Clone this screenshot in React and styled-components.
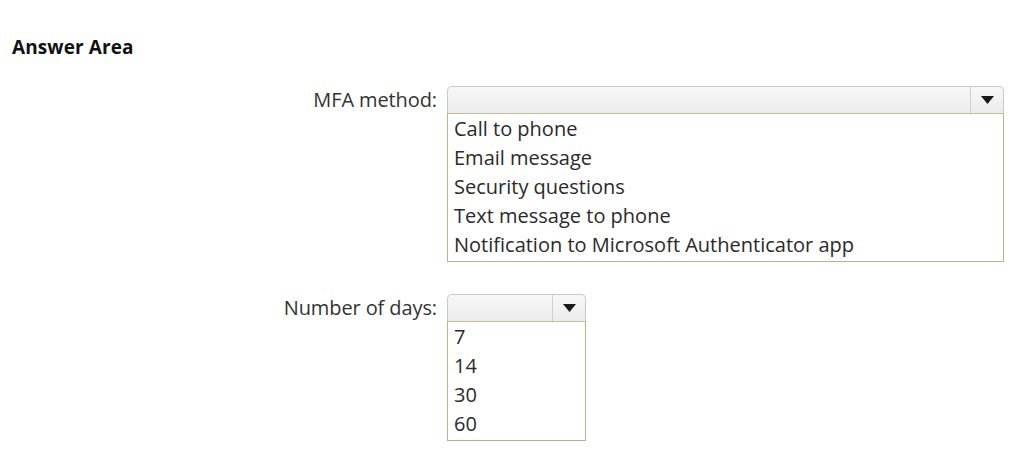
import React from "react";
import styled, { createGlobalStyle } from "styled-components";

const GlobalStyle = createGlobalStyle`
  body {
    margin: 0;
    background: #fff;
    font-family: "Open Sans", "Liberation Sans", sans-serif;
    color: #222;
  }
`;

const Page = styled.div`
  padding: 37px 12px 0;
`;

const Heading = styled.h2`
  margin: 0 0 29px;
  font-size: 19px;
  font-weight: 700;
  color: #111;
  line-height: 20px;
  letter-spacing: 0.1px;
`;

const Row = styled.div`
  display: flex;
  align-items: flex-start;
  margin-bottom: ${(p) => p.gap || 0}px;
`;

const Label = styled.div`
  width: 435px;
  flex-shrink: 0;
  text-align: right;
  font-size: 20px;
  line-height: 27px;
  color: #333;
  padding-right: 10px;
  box-sizing: border-box;
  letter-spacing: -0.1px;
`;

const Dropdown = styled.div`
  display: flex;
  flex-direction: column;
  width: ${(p) => p.width}px;
`;

const SelectBox = styled.div`
  display: flex;
  height: 27px;
  border: 1px solid #c9c9c9;
  border-bottom: none;
  border-radius: 5px 5px 0 0;
  background: linear-gradient(#f7f7f7, #ececec);
  box-sizing: border-box;
`;

const SelectField = styled.div`
  flex: 1;
`;

const Arrow = styled.div`
  width: 32px;
  border-left: 1px solid #cfcfcf;
  display: flex;
  align-items: center;
  justify-content: center;
`;

const Options = styled.ul`
  list-style: none;
  margin: 0;
  padding: 0 0 2px;
  border: 1px solid #b7b38c;
  border-top-color: #c9b98e;
  background: #fff;
`;

const Option = styled.li`
  font-size: 20px;
  line-height: 29px;
  padding-left: 6px;
  color: #2a2a2a;
  white-space: nowrap;
`;

const Caret = () => (
  <svg width="13" height="8" viewBox="0 0 13 8">
    <polygon points="0,0 13,0 6.5,8" fill="#1a1a1a" />
  </svg>
);

const Select = ({ width, options }) => (
  <Dropdown width={width}>
    <SelectBox>
      <SelectField />
      <Arrow>
        <Caret />
      </Arrow>
    </SelectBox>
    <Options>
      {options.map((o) => (
        <Option key={o}>{o}</Option>
      ))}
    </Options>
  </Dropdown>
);

const App = () => (
  <Page>
    <GlobalStyle />
    <Heading>Answer Area</Heading>
    <Row gap={32}>
      <Label>MFA method:</Label>
      <Select
        width={557}
        options={[
          "Call to phone",
          "Email message",
          "Security questions",
          "Text message to phone",
          "Notification to Microsoft Authenticator app",
        ]}
      />
    </Row>
    <Row>
      <Label>Number of days:</Label>
      <Select width={139} options={["7", "14", "30", "60"]} />
    </Row>
  </Page>
);

export default App;
